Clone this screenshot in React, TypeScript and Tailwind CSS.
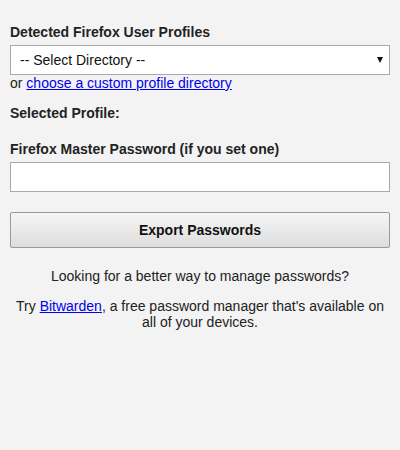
export default function App() {
    return (
        <div
            className="min-h-[450px] bg-[#f3f3f3] px-[10px] pt-[24px] text-[14px] leading-[16px] text-[#222]"
            style={{ fontFamily: '"Liberation Sans", Arial, sans-serif' }}
        >
            <div className="font-bold">Detected Firefox User Profiles</div>
            <div className="relative mt-[5px] flex h-[30px] items-center border border-[#a9a9a9] bg-white pl-[9px] text-[#111]">
                -- Select Directory --
                {/* dropdown arrow */}
                <svg className="absolute right-[6px] top-[11px]" width="6" height="6" viewBox="0 0 6 6">
                    <path d="M0 0 H6 L3 6 Z" fill="#111" />
                </svg>
            </div>
            <div>
                or{" "}
                <a href="#" className="text-[#0000ee] underline">
                    choose a custom profile directory
                </a>
            </div>

            <div className="mt-[14px] font-bold">Selected Profile:</div>

            <div className="mt-[20px] font-bold">Firefox Master Password (if you set one)</div>
            <input
                type="password"
                className="mt-[5px] block h-[30px] w-full border border-[#a9a9a9] bg-white outline-none"
            />

            <button className="mt-[20px] block h-[36px] w-full rounded-[2px] border border-[#9a9a9a] bg-gradient-to-b from-[#f5f5f5] to-[#dddddd] font-bold text-[#111]">
                Export Passwords
            </button>

            <div className="mt-[20px] text-center">Looking for a better way to manage passwords?</div>
            <div className="mt-[14px] text-center">
                Try{" "}
                <a href="#" className="text-[#0000ee] underline">
                    Bitwarden
                </a>
                , a free password manager that's available on all of your devices.
            </div>
        </div>
    );
}
